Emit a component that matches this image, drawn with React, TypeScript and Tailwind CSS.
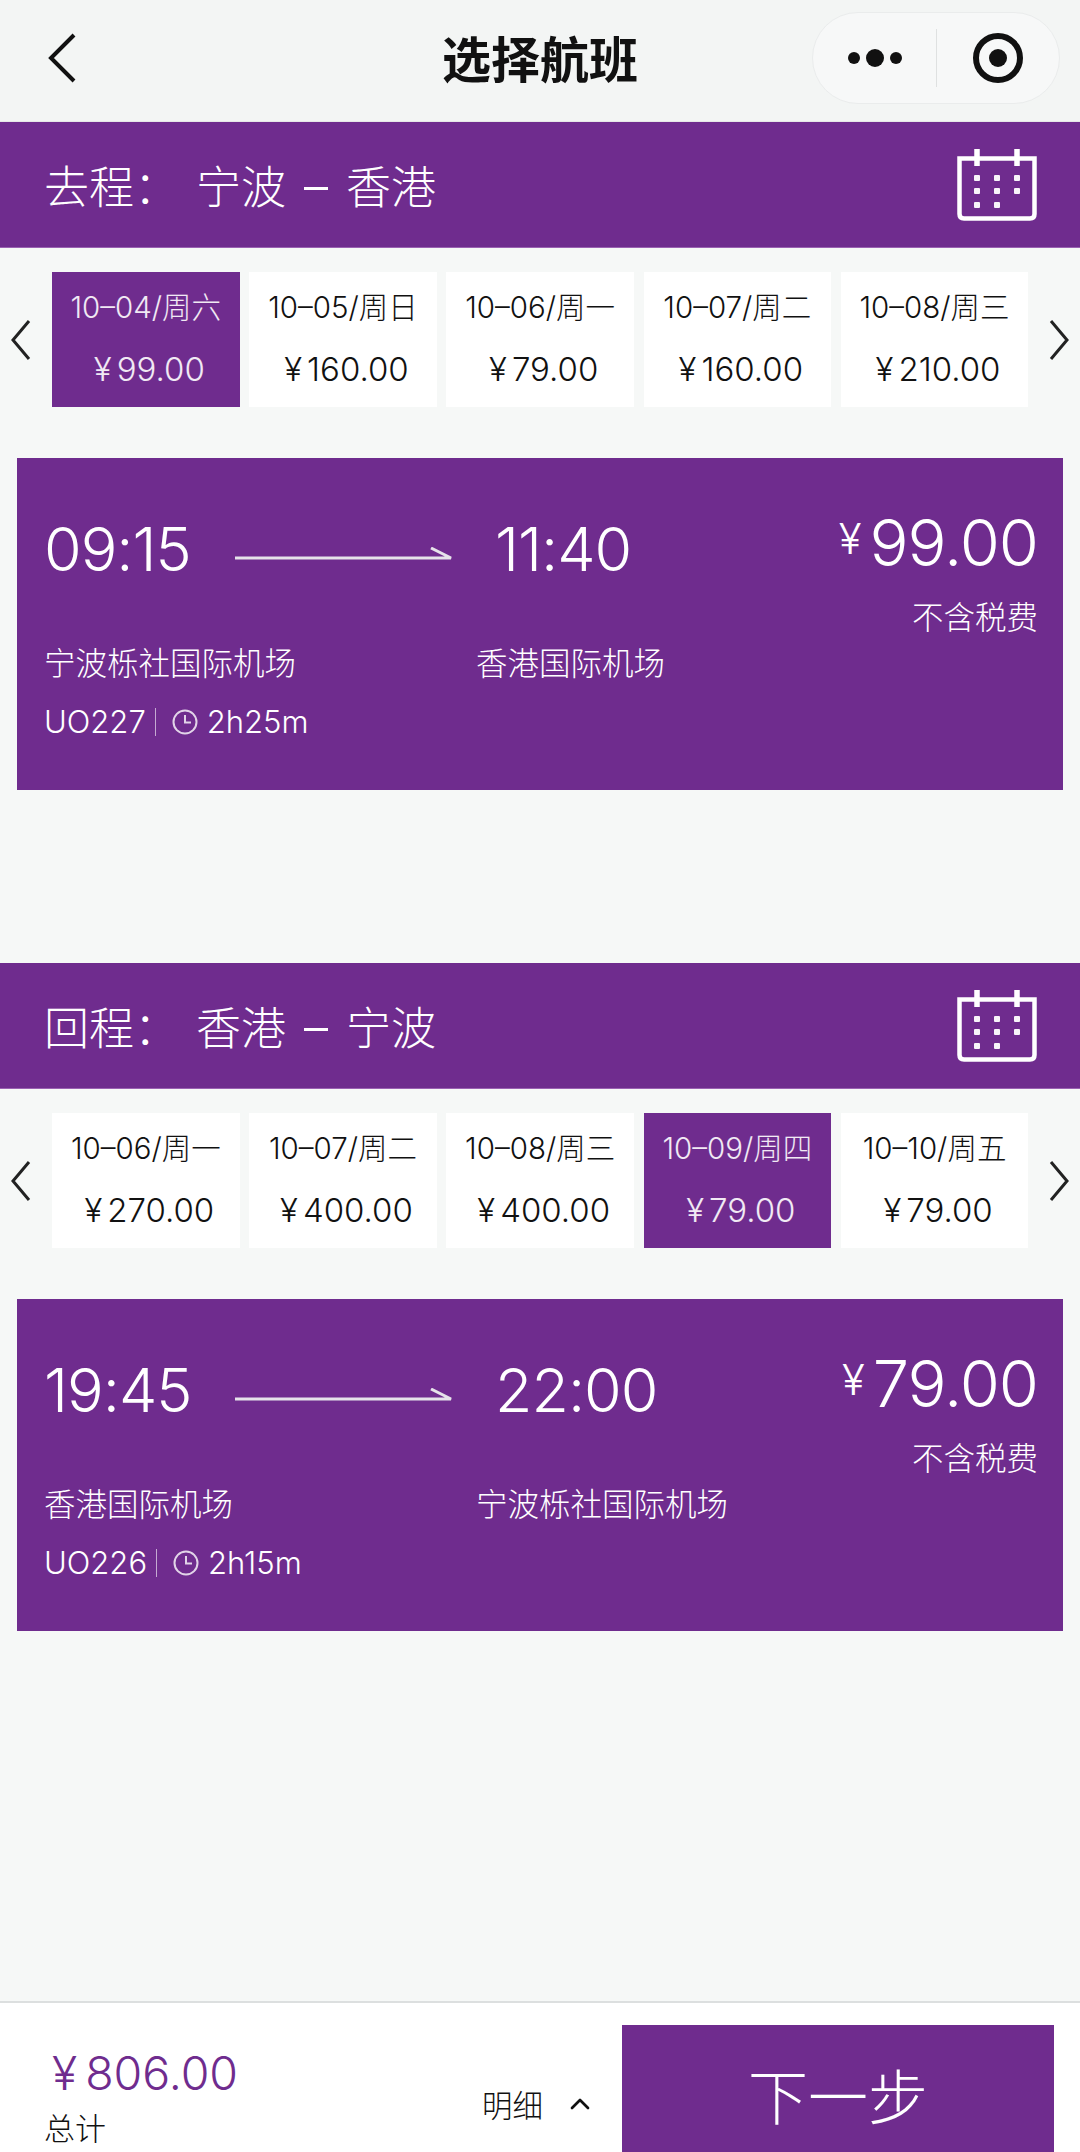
import { ChevronUp } from 'lucide-react'

const FONT = "font-['Inter','Noto_Sans_CJK_SC',sans-serif]"

type DateItem = { date: string; price: string; active?: boolean }

type Flight = {
  label: string
  from_city: string
  to_city: string
  dates: DateItem[]
  depart: string
  arrive: string
  price: string
  from: string
  to: string
  code: string
  duration: string
}

const FLIGHTS: Flight[] = [
  {
    label: '去程：',
    from_city: '宁波',
    to_city: '香港',
    dates: [
      { date: '10–04/周六', price: '99.00', active: true },
      { date: '10–05/周日', price: '160.00' },
      { date: '10–06/周一', price: '79.00' },
      { date: '10–07/周二', price: '160.00' },
      { date: '10–08/周三', price: '210.00' },
    ],
    depart: '09:15',
    arrive: '11:40',
    price: '99.00',
    from: '宁波栎社国际机场',
    to: '香港国际机场',
    code: 'UO227',
    duration: '2h25m',
  },
  {
    label: '回程：',
    from_city: '香港',
    to_city: '宁波',
    dates: [
      { date: '10–06/周一', price: '270.00' },
      { date: '10–07/周二', price: '400.00' },
      { date: '10–08/周三', price: '400.00' },
      { date: '10–09/周四', price: '79.00', active: true },
      { date: '10–10/周五', price: '79.00' },
    ],
    depart: '19:45',
    arrive: '22:00',
    price: '79.00',
    from: '香港国际机场',
    to: '宁波栎社国际机场',
    code: 'UO226',
    duration: '2h15m',
  },
]

function CalendarIcon() {
  const dots = [
    [20, 29], [40, 29], [60, 29],
    [20, 42], [40, 42], [60, 42],
    [20, 56], [40, 56],
  ]
  return (
    <svg width="80" height="72" viewBox="0 0 80 72" fill="none" className="shrink-0">
      <path d="M2.5 9.5H77.5V65Q77.5 69.5 73 69.5H7Q2.5 69.5 2.5 65Z" stroke="white" strokeWidth="4.5" />
      <path d="M20 0V17M60 0V17" stroke="white" strokeWidth="5.5" />
      {dots.map(([x, y]) => (
        <rect key={`${x}-${y}`} x={x - 3} y={y - 3} width="6" height="6" rx="1" fill="white" opacity="0.95" />
      ))}
    </svg>
  )
}

function SideArrow({ right }: { right?: boolean }) {
  return (
    <svg width="20" height="42" viewBox="0 0 20 42" fill="none" className="shrink-0">
      <path d={right ? 'M2 2L18 21L2 40' : 'M18 2L2 21L18 40'} stroke="#222" strokeWidth="3" />
    </svg>
  )
}

function ClockIcon() {
  return (
    <svg width="26" height="26" viewBox="0 0 26 26" fill="none" className="shrink-0">
      <circle cx="13" cy="13" r="11.5" stroke="white" strokeOpacity="0.8" strokeWidth="2" />
      <path d="M13 6V13.5H19" stroke="white" strokeOpacity="0.8" strokeWidth="2" />
    </svg>
  )
}

function FlightSection({ flight }: { flight: Flight }) {
  return (
    <section>
      <div className="h-[126px] bg-[#6f2c8e] border-b border-[#9a62b2] flex items-center justify-between pl-[44px] pr-[43px] text-white">
        <div className="flex items-center text-[45px] font-light leading-none pt-[5px]">
          <span>{flight.label}</span>
          <span className="ml-[17px]">{flight.from_city}</span>
          <span className="mx-[18px] w-[24px] h-[3px] bg-white mt-[2px]" />
          <span>{flight.to_city}</span>
        </div>
        <CalendarIcon />
      </div>

      <div className="mt-[24px] pl-[11px] flex items-center">
        <SideArrow />
        <div className="mx-[21px] flex gap-[9.6px]">
          {flight.dates.map(d => (
            <div
              key={d.date}
              className={`w-[187.6px] h-[135px] flex flex-col items-center pt-[17px] ${d.active ? 'bg-[#6f2c8e] text-white/90' : 'bg-white text-[#111]'}`}
            >
              <span className="text-[29.5px] font-light leading-[36px] whitespace-nowrap">{d.date}</span>
              <span className="mt-[23px] pl-[7px] text-[33px] font-light leading-[42px] whitespace-nowrap">
                <span className="mr-[5px]">¥</span>{d.price}
              </span>
            </div>
          ))}
        </div>
        <SideArrow right />
      </div>

      <div className="mt-[51px] mx-[17px] h-[332px] bg-[#6f2c8e] text-white flex justify-between pl-[27px] pr-[25px]">
        <div>
          <div className="pt-[61px] h-[121px] flex items-center">
            <span className="w-[191px] text-[61px] font-light tracking-[-1px] leading-[60px]">{flight.depart}</span>
            <svg width="218" height="14" viewBox="0 0 218 14" fill="none" className="mt-[10px] shrink-0">
              <path d="M0 11H216L196 1" stroke="#e6e3ea" strokeWidth="3" />
            </svg>
            <span className="ml-[42px] text-[61px] font-light tracking-[-1px] leading-[60px]">{flight.arrive}</span>
          </div>
          <div className="mt-[65px] h-[40px] flex items-center text-[31.5px] font-light leading-[40px]">
            <span className="w-[432px]">{flight.from}</span>
            <span>{flight.to}</span>
          </div>
          <div className="mt-[18px] h-[40px] flex items-center text-[31px] font-light leading-[40px]">
            <span>{flight.code}</span>
            <span className="ml-[9px] mr-[16px] w-px h-[28px] bg-white/60" />
            <ClockIcon />
            <span className="ml-[9px]">{flight.duration}</span>
          </div>
        </div>
        <div className="pt-[50px] flex flex-col items-end">
          <div className="h-[70px] flex items-center">
            <span className="text-[42px] font-light mr-[8px] leading-none -mt-[8px]">¥</span>
            <span className="text-[65px] font-light tracking-[-1px] leading-[70px]">{flight.price}</span>
          </div>
          <div className="mt-[20px] text-[31.5px] font-light leading-[40px]">不含税费</div>
        </div>
      </div>
    </section>
  )
}

export default function App() {
  return (
    <div className={`${FONT} h-[2152px] overflow-hidden bg-[#f6f8f7] flex flex-col`}>
      {/* nav bar */}
      <div className="h-[122px] shrink-0 bg-[#f3f5f4] border-b border-[#e6e8e8] flex items-center justify-between pl-[48px] pr-[20px] relative">
        <svg width="28" height="50" viewBox="0 0 28 50" fill="none" className="-mt-[5px]">
          <path d="M26 2L3 25L26 48" stroke="#111" strokeWidth="4" />
        </svg>
        <h1 className="absolute left-0 right-0 text-center text-[49px] font-bold text-[#111] leading-none pointer-events-none">选择航班</h1>
        <div className="w-[248px] h-[92px] -mt-[6px] rounded-full bg-[#f7f8f8] border border-[#eaecec] flex items-center">
          <div className="w-[123px] flex items-center justify-center gap-[6px]">
            <span className="w-[12px] h-[12px] rounded-full bg-[#111]" />
            <span className="w-[18px] h-[18px] rounded-full bg-[#111]" />
            <span className="w-[12px] h-[12px] rounded-full bg-[#111]" />
          </div>
          <span className="w-px h-[58px] bg-[#dfe1e1]" />
          <div className="flex-1 flex items-center justify-center">
            <span className="w-[50px] h-[50px] rounded-full border-[6px] border-[#111] flex items-center justify-center">
              <span className="w-[18px] h-[18px] rounded-full bg-[#111]" />
            </span>
          </div>
        </div>
      </div>

      <FlightSection flight={FLIGHTS[0]} />
      <div className="h-[173px] shrink-0" />
      <FlightSection flight={FLIGHTS[1]} />

      {/* footer */}
      <div className="mt-auto h-[151px] shrink-0 bg-white border-t-2 border-[#dcdfdf] flex items-start pl-[44px]">
        <div className="w-[438px] pt-[44px]">
          <div className="ml-[8px] text-[#6f2c8e] font-light leading-[52px] text-[46.5px] whitespace-nowrap">
            <span className="mr-[8px]">¥</span>806.00
          </div>
          <div className="mt-[10px] text-[31px] font-light text-[#111] leading-[40px]">总计</div>
        </div>
        <div className="pt-[83px] flex items-center text-[#111]">
          <span className="text-[30.5px] font-light leading-[40px]">明细</span>
          <ChevronUp size={32} strokeWidth={2} className="ml-[21px] -mt-[4px]" />
        </div>
        <div className="ml-auto mr-[26px] mt-[22px] w-[432px] h-[140px] bg-[#6f2c8e] text-white text-[60px] font-light flex justify-center pt-[38px] leading-[70px]">下一步</div>
      </div>
    </div>
  )
}
